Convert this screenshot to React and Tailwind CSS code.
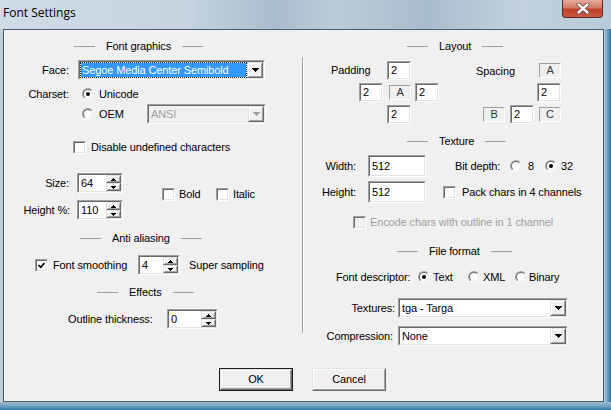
import React from 'react'

function Sunken({ className = '', inner = 'bg-white', children }) {
  return (
    <div className={`border border-t-[#a0a0a0] border-l-[#a0a0a0] border-r-white border-b-white ${className}`}>
      <div className={`w-full h-full border border-t-[#696969] border-l-[#696969] border-r-[#e3e3e3] border-b-[#e3e3e3] ${inner}`}>
        {children}
      </div>
    </div>
  )
}

function Raised({ className = '', children }) {
  return (
    <div className={`border border-t-[#e3e3e3] border-l-[#e3e3e3] border-r-[#696969] border-b-[#696969] ${className}`}>
      <div className="w-full h-full border border-t-white border-l-white border-r-[#a0a0a0] border-b-[#a0a0a0] bg-[#f0f0f0] flex items-center justify-center">
        {children}
      </div>
    </div>
  )
}

function ArrowDown({ color = '#000' }) {
  return (
    <svg width="7" height="4" viewBox="0 0 7 4" shapeRendering="crispEdges">
      <rect x="0" y="0" width="7" height="1" fill={color} />
      <rect x="1" y="1" width="5" height="1" fill={color} />
      <rect x="2" y="2" width="3" height="1" fill={color} />
      <rect x="3" y="3" width="1" height="1" fill={color} />
    </svg>
  )
}

function ArrowUpSmall() {
  return (
    <svg width="5" height="3" viewBox="0 0 5 3" shapeRendering="crispEdges">
      <rect x="2" y="0" width="1" height="1" fill="#000" />
      <rect x="1" y="1" width="3" height="1" fill="#000" />
      <rect x="0" y="2" width="5" height="1" fill="#000" />
    </svg>
  )
}

function ArrowDownSmall() {
  return (
    <svg width="5" height="3" viewBox="0 0 5 3" shapeRendering="crispEdges">
      <rect x="0" y="0" width="5" height="1" fill="#000" />
      <rect x="1" y="1" width="3" height="1" fill="#000" />
      <rect x="2" y="2" width="1" height="1" fill="#000" />
    </svg>
  )
}

function Dropdown({ className = '', text, selected, disabled }) {
  return (
    <Sunken className={className} inner={disabled ? 'bg-[#f0f0f0] flex' : 'bg-white flex'}>
      <div className="flex-1 flex items-center min-w-0">
        {selected ? (
          <div className="ml-[1px] mr-[1px] h-[14px] flex-1 flex items-center bg-[#3399ff] text-white pl-[1px] outline-1 outline-dotted outline-[#1a1a1a]">
            {text}
          </div>
        ) : (
          <span className={`pl-[2px] ${disabled ? 'text-[#a0a0a0]' : ''}`}>{text}</span>
        )}
      </div>
      <Raised className="w-[16px] h-full">
        <ArrowDown color={disabled ? '#a0a0a0' : '#000'} />
      </Raised>
    </Sunken>
  )
}

function Spinner({ className = '', value }) {
  return (
    <Sunken className={className} inner="bg-white flex">
      <span className="flex-1 flex items-center pl-[2px]">{value}</span>
      <div className="w-[15px] h-full flex flex-col">
        <Raised className="w-full flex-1">
          <ArrowUpSmall />
        </Raised>
        <Raised className="w-full flex-1">
          <ArrowDownSmall />
        </Raised>
      </div>
    </Sunken>
  )
}

function Edit({ className = '', value }) {
  return (
    <Sunken className={className} inner="bg-white flex items-center pl-[2px]">
      {value}
    </Sunken>
  )
}

function Radio({ checked, className = '' }) {
  return (
    <div className={`w-[12px] h-[12px] shrink-0 rounded-full border border-t-[#a0a0a0] border-l-[#a0a0a0] border-r-white border-b-white ${className}`}>
      <div className="w-full h-full rounded-full border border-t-[#696969] border-l-[#696969] border-r-[#e3e3e3] border-b-[#e3e3e3] bg-white flex items-center justify-center">
        {checked && <div className="w-[4px] h-[4px] rounded-full bg-black" />}
      </div>
    </div>
  )
}

function Check({ checked, disabled, className = '' }) {
  return (
    <Sunken className={`w-[13px] h-[13px] shrink-0 ${className}`} inner={`${disabled ? 'bg-[#f0f0f0]' : 'bg-white'} flex items-center justify-center`}>
      {checked && (
        <svg width="7" height="7" viewBox="0 0 7 7">
          <path d="M0.5 3 L2.7 5.3 L6.5 1" stroke="#000" strokeWidth="1.7" fill="none" />
        </svg>
      )}
    </Sunken>
  )
}

function LabelBox({ text, className = '' }) {
  return (
    <div className={`w-[22px] h-[15px] self-center border border-t-[#a0a0a0] border-l-[#a0a0a0] border-r-white border-b-white flex items-center justify-center text-[#333] ${className}`}>
      {text}
    </div>
  )
}

function Header({ className = '', text }) {
  return (
    <div className={`flex items-center h-[16px] ${className}`}>
      <div className="w-[21px] h-px bg-[#a0a0a0]" />
      <span className="mx-[11px] leading-none">{text}</span>
      <div className="w-[21px] h-px bg-[#a0a0a0]" />
    </div>
  )
}

function Button({ text, isDefault }) {
  const body = (
    <Raised className="w-full h-full">
      <span>{text}</span>
    </Raised>
  )
  return isDefault ? (
    <div className="w-[74px] h-[23px] border border-[#1e1e1e]">{body}</div>
  ) : (
    <div className="w-[74px] h-[23px]">{body}</div>
  )
}

export default function App() {
  return (
    <div className="w-[611px] h-[410px] flex flex-col overflow-hidden font-['Liberation_Sans',Arial,sans-serif] text-[11px] tracking-[-0.12px] leading-none text-black bg-[#bccbd9]">
      {/* title bar */}
      <div className="h-[29px] flex items-start bg-[linear-gradient(90deg,#cfdbe6_0%,#c7d4e0_30%,#aabdce_45%,#bccbd9_55%,#a9bccd_70%,#c3d1de_85%,#b9cad8_100%)]">
        <div className="pl-[3px] pt-[7px] text-[12px] tracking-normal font-['Open_Sans','Noto_Sans',sans-serif] text-black">Font Settings</div>
        <div className="ml-auto mr-[8px] w-[41px] h-[18px] rounded-b-[4px] border border-t-0 border-[#5a2a22] bg-[linear-gradient(180deg,#e6aa9e_0%,#d47a68_45%,#c0402c_55%,#c95a45_100%)] flex items-center justify-center">
          <svg width="14" height="11" viewBox="0 0 14 11">
            <path d="M2.5 1.5 L11.5 9.5 M11.5 1.5 L2.5 9.5" stroke="#6b3a33" strokeWidth="4" strokeLinecap="round" />
            <path d="M2.5 1.5 L11.5 9.5 M11.5 1.5 L2.5 9.5" stroke="#fff" strokeWidth="2.4" strokeLinecap="round" />
          </svg>
        </div>
      </div>

      <div className="flex h-[373px]">
        <div className="w-[3px] bg-[#bfcedb]" />
        {/* client area */}
        <div className="w-[601px] h-[373px] border border-[#4e5d6b] bg-[#f0f0f0] flex flex-col">
          <div className="flex h-[316px]">
            {/* left column */}
            <div className="w-[298px] flex flex-col pt-[8px]">
              <Header className="ml-[70px]" text="Font graphics" />
              <div className="flex items-center h-[20px] mt-[6px]">
                <span className="w-[65px] text-right">Face:</span>
                <Dropdown className="ml-[9px] w-[187px] h-[20px]" selected text="Segoe Media Center Semibold" />
              </div>
              <div className="flex items-center h-[16px] mt-[6px]">
                <span className="w-[65px] text-right">Charset:</span>
                <Radio className="ml-[13px]" checked />
                <span className="ml-[5px]">Unicode</span>
              </div>
              <div className="flex items-center h-[20px] mt-[2px]">
                <Radio className="ml-[78px]" />
                <span className="ml-[5px] w-[48px]">OEM</span>
                <Dropdown className="w-[119px] h-[20px]" disabled text="ANSI" />
              </div>
              <div className="flex items-center h-[16px] mt-[15px]">
                <Check className="ml-[69px]" />
                <span className="ml-[5px]">Disable undefined characters</span>
              </div>
              <div className="flex mt-[18px]">
                <div className="flex flex-col gap-[7px]">
                  <div className="flex items-center h-[20px]">
                    <span className="w-[65px] text-right">Size:</span>
                    <Spinner className="ml-[8px] w-[46px] h-[20px]" value="64" />
                  </div>
                  <div className="flex items-center h-[20px]">
                    <span className="w-[66px] text-right">Height %:</span>
                    <Spinner className="ml-[7px] w-[46px] h-[20px]" value="110" />
                  </div>
                </div>
                <div className="flex items-center h-[16px] mt-[13px]">
                  <Check className="ml-[39px]" />
                  <span className="ml-[4px] w-[37px]">Bold</span>
                  <Check />
                  <span className="ml-[4px]">Italic</span>
                </div>
              </div>
              <Header className="ml-[76px] mt-[10px]" text="Anti aliasing" />
              <div className="flex items-center h-[20px] mt-[9px]">
                <Check className="ml-[31px]" checked />
                <span className="ml-[5px] w-[85px]">Font smoothing</span>
                <Spinner className="w-[42px] h-[20px]" value="4" />
                <span className="ml-[9px]">Super sampling</span>
              </div>
              <Header className="ml-[93px] mt-[9px]" text="Effects" />
              <div className="flex items-center h-[20px] mt-[9px]">
                <span className="ml-[64px] w-[99px]">Outline thickness:</span>
                <Spinner className="w-[51px] h-[20px]" value="0" />
              </div>
            </div>

            {/* separator */}
            <div className="w-[2px] mt-[27px] h-[276px] border-l border-l-[#a0a0a0] border-r border-r-white" />

            {/* right column */}
            <div className="flex-1 flex flex-col pt-[8px]">
              <Header className="ml-[103px]" text="Layout" />
              <div className="flex mt-[7px]">
                <div className="ml-[55px] grid grid-cols-[24px_24px_24px] auto-rows-[19px] gap-x-[4px] gap-y-[3px]">
                  <span className="col-start-1 row-start-1 self-center ml-[-28px] whitespace-nowrap">Padding</span>
                  <Edit className="col-start-2 row-start-1" value="2" />
                  <Edit className="col-start-1 row-start-2" value="2" />
                  <LabelBox className="col-start-2 row-start-2 justify-self-end" text="A" />
                  <Edit className="col-start-3 row-start-2" value="2" />
                  <Edit className="col-start-2 row-start-3" value="2" />
                </div>
                <div className="ml-[44px] grid grid-cols-[24px_24px_24px] auto-rows-[19px] gap-x-[3px] gap-y-[3px]">
                  <span className="col-start-1 col-span-2 row-start-1 self-center ml-[-7px] mt-[1px] whitespace-nowrap">Spacing</span>
                  <LabelBox className="col-start-3 row-start-1 justify-self-end" text="A" />
                  <Edit className="col-start-3 row-start-2" value="2" />
                  <LabelBox className="col-start-1 row-start-3 justify-self-start" text="B" />
                  <Edit className="col-start-2 row-start-3" value="2" />
                  <LabelBox className="col-start-3 row-start-3 justify-self-end" text="C" />
                </div>
              </div>
              <Header className="ml-[103px] mt-[9px]" text="Texture" />
              <div className="flex items-center h-[22px] mt-[6px]">
                <span className="w-[52px] text-right">Width:</span>
                <Edit className="ml-[12px] w-[58px] h-[22px]" value="512" />
                <span className="ml-[29px] w-[55px]">Bit depth:</span>
                <Radio />
                <span className="ml-[6px] w-[17px]">8</span>
                <Radio checked />
                <span className="ml-[4px]">32</span>
              </div>
              <div className="flex items-center h-[22px] mt-[4px]">
                <span className="w-[52px] text-right">Height:</span>
                <Edit className="ml-[12px] w-[58px] h-[22px]" value="512" />
                <Check className="ml-[17px]" />
                <span className="ml-[6px]">Pack chars in 4 channels</span>
              </div>
              <div className="flex items-center h-[16px] mt-[11px]">
                <Check className="ml-[49px]" disabled />
                <span className="ml-[4px] text-[#a0a0a0]">Encode chars with outline in 1 channel</span>
              </div>
              <Header className="ml-[93px] mt-[13px]" text="File format" />
              <div className="flex items-center h-[16px] mt-[10px]">
                <span className="ml-[32px] w-[82px]">Font descriptor:</span>
                <Radio checked />
                <span className="ml-[3px] w-[35px]">Text</span>
                <Radio />
                <span className="ml-[3px] w-[32px]">XML</span>
                <Radio />
                <span className="ml-[2px]">Binary</span>
              </div>
              <div className="flex items-center h-[20px] mt-[13px]">
                <span className="w-[91px] text-right">Textures:</span>
                <Dropdown className="ml-[3px] w-[170px] h-[20px]" text="tga - Targa" />
              </div>
              <div className="flex items-center h-[20px] mt-[8px]">
                <span className="w-[89px] text-right">Compression:</span>
                <Dropdown className="ml-[5px] w-[170px] h-[20px]" text="None" />
              </div>
            </div>
          </div>

          {/* buttons */}
          <div className="flex pl-[215px] gap-[19px] mt-[22px]">
            <Button text="OK" isDefault />
            <Button text="Cancel" />
          </div>
        </div>
        <div className="flex-1 bg-[linear-gradient(90deg,#b3cadb_0%,#7fa8c6_40%,#4a86b0_80%,#2f5f86_100%)]" />
      </div>
      <div className="h-[8px] bg-[linear-gradient(180deg,#9fb9cd_0%,#7fa7c4_40%,#4d8ab3_80%,#2f6f99_100%)]" />
    </div>
  )
}
